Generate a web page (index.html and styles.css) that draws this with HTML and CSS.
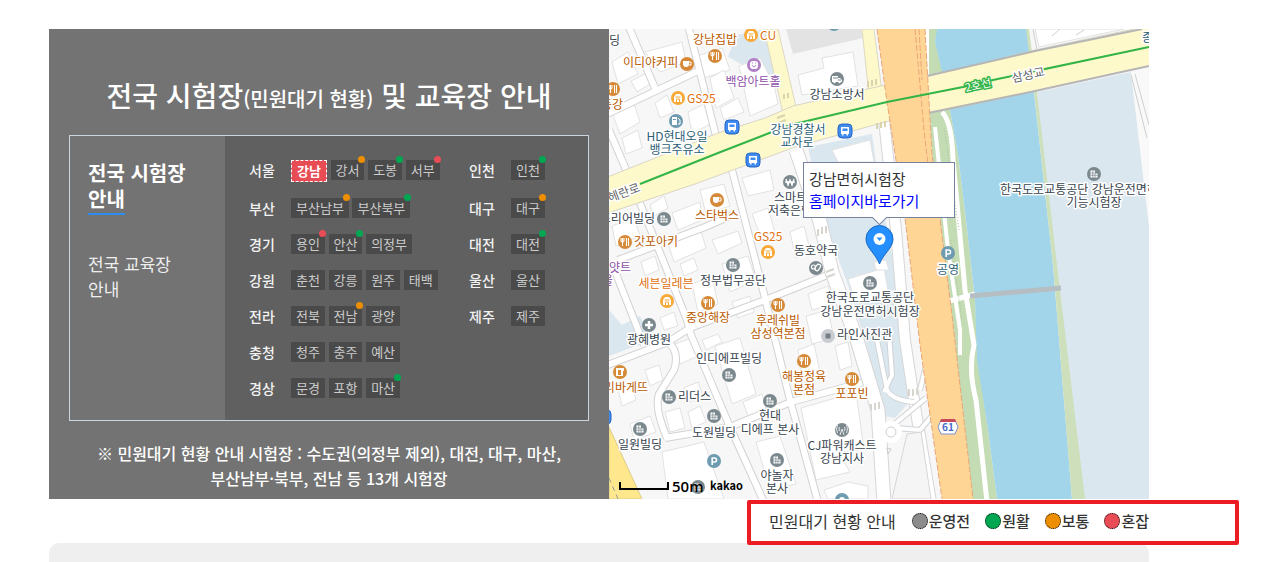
FILE: index.html
```html
<!DOCTYPE html>
<html lang="ko">
<head>
    <meta charset="UTF-8">
    <meta name="viewport" content="width=device-width, initial-scale=1.0">
    <title>전국 시험장 및 교육장 안내</title>
    <link rel="stylesheet" href="styles.css">
</head>
<body>
    <main class="container">
        <section class="guide">
            <div class="panel">
                <h1>전국 시험장<small>(민원대기 현황)</small> 및 교육장 안내</h1>
                <div class="tabs">
                    <nav class="tab-menu">
                        <a href="#test" class="active">전국 시험장 <span>안내</span></a>
                        <a href="#edu">전국 교육장 안내</a>
                    </nav>
                    <div class="regions" id="test">
                        <div class="region-row">
                            <strong>서울</strong>
                            <div><a href="#" class="chip on">강남</a> <a href="#" class="chip normal">강서</a> <a href="#" class="chip smooth">도봉</a> <a href="#" class="chip busy">서부</a></div>
                            <strong>인천</strong>
                            <div><a href="#" class="chip smooth">인천</a></div>
                        </div>
                        <div class="region-row">
                            <strong>부산</strong>
                            <div><a href="#" class="chip normal">부산남부</a> <a href="#" class="chip smooth">부산북부</a></div>
                            <strong>대구</strong>
                            <div><a href="#" class="chip normal">대구</a></div>
                        </div>
                        <div class="region-row">
                            <strong>경기</strong>
                            <div><a href="#" class="chip busy">용인</a> <a href="#" class="chip smooth">안산</a> <a href="#" class="chip">의정부</a></div>
                            <strong>대전</strong>
                            <div><a href="#" class="chip smooth">대전</a></div>
                        </div>
                        <div class="region-row">
                            <strong>강원</strong>
                            <div><a href="#" class="chip">춘천</a> <a href="#" class="chip">강릉</a> <a href="#" class="chip">원주</a> <a href="#" class="chip">태백</a></div>
                            <strong>울산</strong>
                            <div><a href="#" class="chip">울산</a></div>
                        </div>
                        <div class="region-row">
                            <strong>전라</strong>
                            <div><a href="#" class="chip">전북</a> <a href="#" class="chip normal">전남</a> <a href="#" class="chip">광양</a></div>
                            <strong>제주</strong>
                            <div><a href="#" class="chip">제주</a></div>
                        </div>
                        <div class="region-row">
                            <strong>충청</strong>
                            <div><a href="#" class="chip">청주</a> <a href="#" class="chip">충주</a> <a href="#" class="chip">예산</a></div>
                        </div>
                        <div class="region-row">
                            <strong>경상</strong>
                            <div><a href="#" class="chip">문경</a> <a href="#" class="chip">포항</a> <a href="#" class="chip smooth">마산</a></div>
                        </div>
                    </div>
                </div>
                <p class="notice">※ 민원대기 현황 안내 시험장 : 수도권(의정부 제외), 대전, 대구, 마산,<br>부산남부·북부, 전남 등 13개 시험장</p>
            </div>

            <div class="map">
                <svg class="map-canvas" viewBox="609 29 540 470" preserveAspectRatio="xMidYMid slice" role="img" aria-label="강남면허시험장 지도">
                    <defs>
                        <g id="bldg"><circle r="7" fill="#7b898f"/><path d="M-3.5-3.5H1V-.5H3.5V3.5H-3.5Z" fill="#fff"/><path d="M-1.2-3.5V3.5M1-.5V3.5M-3.5-1H1M-3.5 1.3H3.5" stroke="#7b898f" stroke-width=".7"/></g>
                        <g id="food"><circle r="7" fill="#d68a38"/><path d="M-4-4V-1.5Q-4 0-2.5 0T-1-1.5V-4M-2.5-4V4M1.5-4V4M3.5-4V4" stroke="#fff" stroke-width="1.1" fill="none"/></g>
                        <g id="cafe"><circle r="7" fill="#d68a38"/><path d="M-4-3H2V0Q2 3-1 3T-4 0Z" fill="#fff"/><path d="M2-2H4V1H2" fill="none" stroke="#fff"/></g>
                        <g id="store"><circle r="7" fill="#f8a938"/><path d="M-4-1L-2-4H2L4-1V4H-4Z" fill="#fff"/><path d="M-2.5-1H2.5M-1.5 4V1H1.5V4" stroke="#f8a938" fill="none"/></g>
                        <g id="bus"><rect x="-7" y="-7" width="14" height="14" rx="4" fill="#3f8bf0" stroke="#2767c4"/><path d="M-4-4H4V3H3V4.5H1.5V3H-1.5V4.5H-3V3H-4Z" fill="#fff"/><path d="M-2.5-2.5H2.5V0H-2.5Z" fill="#3f8bf0"/></g>
                        <g id="park"><circle r="7" fill="#6f9bb0"/><path d="M-1.8 4V-3H.5Q2.5-3 2.5-1T.5 1H-1.8" fill="none" stroke="#fff" stroke-width="1.6"/></g>
                        <path id="streets" d="M688 25L716 136M640 203L687 320 691 335 730 427 764 502M732 170L763 290 790 400 818 502M605 366L668 342 690 328 765 300 835 272M665 438L730 427 791 402 864 382M613 266L644 345M668 342Q680 352 674 370L659 394Q654 408 667 438M618 260L705 227 735 214M605 115L700 70M628 25L655 88M609 130L627 172"/>
                        <path id="avenue" d="M796 150L820 222 832 272 857 340 878 410 884 502"/>
                        <path id="frontage" d="M884 120L896 230 905 340 914 400 931 502"/>
                        <path id="ramps" d="M877 340L887 390Q892 400 914 402M889 334L892 375 884 392M892 426L926 398M930 350L920 390M896 428L920 430 932 416"/>
                    </defs>

                    <rect x="609" y="29" width="540" height="470" fill="#f7f7f8"/>

                    <!-- blocks -->
                    <g fill="#dbe7ef">
                        <path d="M728 57L736 35 766 29 775 80 756 72Z"/>
                        <path d="M609 310L622 325 640 316 652 340 609 356Z"/>
                        <path d="M808 147L872 134 880 190 893 260 902 340 911 400 895 418 883 416 868 350 848 285 823 218Z"/>
                        <path d="M1037 92L1131 72 1149 225V499H1083L1058 300Z"/>
                    </g>
                    <path d="M786 29H861L863 38 793 54Z" fill="#e3e3e4"/>

                    <!-- buildings -->
                    <g fill="#fff" stroke="#e2e2e3">
                        <path d="M645 52L682 42 686 62 660 72Z"/><path d="M612 62L628 52 638 74 618 84Z"/><path d="M631 81L645 74 650 84 637 92Z"/>
                        <path d="M655 103L667 95 674 112 660 118Z"/><path d="M611 110L634 104 640 122 620 134Z"/><path d="M688 112L704 104 710 124 692 134Z"/>
                        <path d="M622 138L638 130 642 148 626 154Z"/><path d="M697 56L722 48 730 70 703 78Z"/><path d="M710 78L724 70 734 98 716 108Z"/><path d="M720 108L738 98 744 112 724 120Z"/>
                        <path d="M739 66L760 58 774 84 778 104 750 116Z"/><path d="M798 75L824 68 822 58 853 52 858 86 802 95Z"/>
                        <path d="M700 190L724 184 730 206 706 214Z"/><path d="M650 205L664 196 668 208 654 216Z"/><path d="M672 213L700 202 702 220 678 230Z"/>
                        <path d="M668 243L701 231 706 248 674 262Z"/><path d="M712 240L738 231 742 243 718 254Z"/><path d="M612 226L634 218 640 236 616 246Z"/>
                        <path d="M641 262L655 256 659 270 645 276Z"/><path d="M680 264L694 258 698 270 684 276Z"/><path d="M752 214L768 208 776 236 762 240Z"/>
                        <path d="M742 178L770 170 774 190 748 196Z"/><path d="M790 232L804 226 810 250 796 258Z"/><path d="M722 264L748 256 756 280 730 292Z"/>
                        <path d="M692 284L712 276 718 304 698 312Z"/><path d="M660 318L674 312 678 326 664 330Z"/><path d="M732 302L750 296 754 312 738 318Z"/>
                        <path d="M675 344L692 338 698 356 680 364Z"/><path d="M645 370L659 365 663 380 650 386Z"/><path d="M618 388L632 384 636 400 622 406Z"/>
                        <path d="M715 346L740 338 756 394 732 404Z"/><path d="M702 340L718 334 722 342 706 350Z"/><path d="M684 388L698 382 703 396 690 402Z"/>
                        <path d="M665 412L680 408 685 428 670 432Z"/><path d="M688 412L700 406 706 422 692 428Z"/><path d="M630 424L650 416 656 432 634 440Z"/>
                        <path d="M662 452L704 442 724 499H668Z"/><path d="M743 402L762 394 766 410 748 416Z"/><path d="M756 442L780 436 796 484 770 490Z"/>
                        <path d="M798 350L814 344 820 372 802 376Z"/><path d="M835 346L848 342 852 366 840 370Z"/><path d="M808 294L828 286 834 304 812 310Z"/>
                        <path d="M806 316L828 310 834 338 812 344Z"/><path d="M848 279L884 268 889 296 856 304Z"/><path d="M874 262L886 260 889 270 876 270Z"/>
                        <path d="M801 408L856 392 864 450 838 452 850 472 816 480Z"/><path d="M824 490L848 482 868 486V499H828Z"/>
                        <path d="M1035 29L1039 47 1124 29Z"/><path d="M832 150L870 140 874 162H838Z"/>
                    </g>

                    <!-- side streets -->
                    <g fill="none" stroke-linejoin="round">
                        <use href="#streets" stroke="#d2d2d4" stroke-width="8"/>
                        <use href="#streets" stroke="#fff" stroke-width="6"/>
                        <use href="#avenue" stroke="#d6d6d8" stroke-width="15"/>
                        <use href="#avenue" stroke="#fff" stroke-width="13"/>
                        <use href="#frontage" stroke="#d6d6d8" stroke-width="12"/>
                        <use href="#frontage" stroke="#fff" stroke-width="10"/>
                        <use href="#ramps" stroke="#d0d3d6" stroke-width="6"/>
                        <use href="#ramps" stroke="#fff" stroke-width="4"/>
                        <circle cx="891" cy="432" r="11" fill="#fff"/><circle cx="891" cy="432" r="5" stroke="#ccd0d3"/>
                        <path d="M907 434L921 432 931 499H892Z" fill="#f5f5f6" stroke="#d6d6d8"/>
                    </g>
                    <path d="M871 404V411M875 403V410M879 402V409M909 389V396M913 389V396M917 388V395M818 229V236M822 227V234M826 226V233M826 272L834 269M827 277L835 274" stroke="#d8d5cf" stroke-width="2"/>
                    <path d="M887 448L891 449 888 454Z" fill="none" stroke="#ccc"/>

                    <!-- river and its banks -->
                    <path d="M925 29H938L935 42 943 72 950 110 958 155 966 220 975 300 978 360 988 430 997 499H973L950 330 932 155Z" fill="#c3dcb3"/>
                    <path d="M937 29L935 42 942 72 950 110 958 155 966 220 975 300 977 360 988 430 997 499H1072L1053 265 1034 92 1027 29Z" fill="#a3d5ea"/>
                    <path d="M1026 29H1029L1037 92 1057 265 1085 499H1072L1053 265 1034 92Z" fill="#cde0bb"/>
                    <path d="M946 302L975 294" stroke="#fff" stroke-width="5"/>
                    <path d="M970 296L1061 288" stroke="#b5bec3" stroke-width="5"/>
                    <g fill="none" stroke="#fff">
                        <path d="M935 127L948 250 960 330 960 355" stroke-width="4"/>
                        <path d="M942 112Q952 122 953 160L965 290 974 345Q968 370 976 400L987 502" stroke-width="5"/>
                        <path d="M927 29V76" stroke-width="4"/>
                    </g>
                    <path d="M944 128L959 230M951 240L962 320" stroke="#aebfa4" stroke-dasharray="1 2"/>

                    <!-- main roads -->
                    <path d="M764 29H778L796 107 784 118ZM862 29H874L882 92 869 95Z" fill="#fef9cb" stroke="#ddd9c0"/>
                    <path d="M605 178L718 133 765 118 793 106 885 85 927 76 980 64 1035 50 1153 25V65L1035 91 970 105 928 113 885 122 795 147 695 184 605 214Z" fill="#fef9cb" stroke="#d8d5c4"/>
                    <path d="M927 76L1035 51 1142 29M928 113L1035 91 1149 66" fill="none" stroke="#b6b6b6" stroke-width="2"/>
                    <path d="M868 81V87M872 80V86M876 79V85M877 123V129M881 122V128M885 121V127M777 118L785 115M778 123L786 120M784 94V99M788 93V98" stroke="#d9d4ae" stroke-width="2"/>
                    <path d="M609 427L642 499H609Z" fill="#ffe78d" stroke="#dccb85"/>
                    <path d="M609 478L618 499" stroke="#9a9a9a" stroke-dasharray="5 4"/>
                    <path d="M877 29H925L932 155 952 315 973 499H942L920 345 905 218 887 102Z" fill="#ffd596"/>
                    <g fill="none" stroke="#eba679" stroke-dasharray="6 2">
                        <path d="M877 29L887 102 905 218 920 345 942 499"/><path d="M925 29L932 155 952 315 973 499"/><path d="M915 29L924 130 928 165M919 29L922 80"/>
                    </g>
                    <path d="M640 184L718 153 772 132 790 125 887 102 963 87 993 80 1149 47" fill="none" stroke="#32b447" stroke-width="2"/>
                    <path d="M1131 72L1149 225V68Z" fill="#f9f9f9"/>
                    <path d="M1131 75L1147 138M1135 74L1149 125M1033 29L1037 50M1052 36L1060 29M1076 35L1084 30" stroke="#cfcfcf" fill="none"/>

                    <!-- places -->
                    <use href="#store" x="751" y="35"/><use href="#store" x="678" y="98"/><use href="#store" x="768" y="252"/><use href="#store" x="667" y="301"/>
                    <use href="#food" x="715" y="56"/><use href="#food" x="613" y="89"/><use href="#food" x="625" y="242"/><use href="#food" x="708" y="303"/>
                    <use href="#food" x="778" y="305"/><use href="#food" x="804" y="361"/><use href="#food" x="852" y="379"/>
                    <use href="#cafe" x="687" y="64"/><use href="#cafe" x="717" y="200"/>
                    <use href="#bus" x="732" y="127"/><use href="#bus" x="753" y="160"/><use href="#bus" x="845" y="131"/><use href="#bus" x="604" y="417"/>
                    <use href="#bldg" x="1094" y="174"/><use href="#bldg" x="664" y="219"/><use href="#bldg" x="733" y="265"/><use href="#bldg" x="870" y="283"/>
                    <use href="#bldg" x="729" y="375"/><use href="#bldg" x="669" y="397"/><use href="#bldg" x="714" y="416"/><use href="#bldg" x="770" y="401"/>
                    <use href="#bldg" x="640" y="429"/><use href="#bldg" x="777" y="460"/><use href="#bldg" x="698" y="487"/>
                    <use href="#park" x="948" y="253"/><use href="#park" x="714" y="461"/>
                    <circle cx="834" cy="24" r="7" fill="#6f9bb0"/><circle cx="842" cy="500" r="7" fill="#6f9bb0"/><circle cx="842" cy="500" r="3" fill="#fff"/>
                    <circle cx="754" cy="65" r="7" fill="#b07fc4"/><rect x="750" y="61" width="8" height="8" rx="3" fill="#fff"/><path d="M752 65Q754 69 756 65M752 63H753M755 63H756" fill="none" stroke="#b07fc4"/>
                    <circle cx="676" cy="121" r="7" fill="#6f9bb0"/><path d="M672 117H677V125H672Z" fill="#fff"/><path d="M678 118L680 120V124H678" fill="none" stroke="#fff"/><path d="M673 119.5H676" stroke="#6f9bb0"/>
                    <circle cx="837" cy="79" r="7" fill="#7b898f"/><path d="M832 76H838V78H840L842 80V82H832Z" fill="#fff"/><circle cx="834.5" cy="82" r="1.2" fill="#fff"/><circle cx="839.5" cy="82" r="1.2" fill="#fff"/><path d="M833 78H838M838 80H841" stroke="#7b898f"/>
                    <circle cx="790" cy="182" r="7" fill="#7b898f"/><path d="M786 179L788 185 790 180 792 185 794 179M785 182H795" fill="none" stroke="#fff" stroke-width="1.3"/>
                    <circle cx="816" cy="268" r="7" fill="#7b898f"/><g fill="none" stroke="#fff" stroke-width="1.2"><circle cx="813.5" cy="267" r="2"/><rect x="816" y="264" width="4" height="7" rx="2" transform="rotate(35 818 267)"/></g>
                    <circle cx="649" cy="325" r="7" fill="#7b898f"/><path d="M645 325H653M649 321V329" stroke="#fff" stroke-width="2.5"/>
                    <circle cx="828" cy="336" r="7" fill="#c9ccd1"/><path d="M825.5 333.5H830.5V338.5H825.5Z" fill="#777e84"/>
                    <circle cx="620" cy="372" r="7" fill="#d68a38"/><path d="M616 368H624V371H623V376H616Z" fill="#fff"/><path d="M618 370H621V375H618Z" fill="#d68a38"/>
                    <circle cx="842" cy="430" r="7" fill="#7b898f"/><path d="M842 429L840 435M842 429L844 435M839.5 431Q838.5 429 839.5 427M844.5 431Q845.5 429 844.5 427M837.5 433Q835.5 429 837.5 425M846.5 433Q848.5 429 846.5 425" fill="none" stroke="#fff" stroke-width=".8"/>
                    <path d="M941 420H955L958 427 955 434H941L938 427Z" fill="#fff" stroke="#7a93cf"/><path d="M941 419L955 419 956 422H940Z" fill="#c6495b"/>

                    <g class="label">
                        <text x="609" y="45">딩</text>
                        <text x="837" y="99" class="mid">강남소방서</text>
                        <text x="1000" y="194">한국도로교통공단 강남운전면허</text><text x="1094" y="207" class="mid">기능시험장</text>
                        <text x="774" y="202">스마트</text><text x="768" y="215">저축은행</text>
                        <text x="655" y="223" class="end">프리어빌딩</text>
                        <text x="733" y="285" class="mid">정부법무공단</text>
                        <text x="816" y="255" class="mid">동호약국</text>
                        <text x="649" y="344" class="mid">광혜병원</text>
                        <text x="870" y="302" class="mid">한국도로교통공단</text><text x="870" y="316" class="mid">강남운전면허시험장</text>
                        <text x="837" y="339">라인사진관</text>
                        <text x="729" y="363" class="mid">인디에프빌딩</text>
                        <text x="678" y="401">리더스</text>
                        <text x="714" y="437" class="mid">도원빌딩</text>
                        <text x="770" y="420" class="mid">현대</text><text x="770" y="434" class="mid">디에프 본사</text>
                        <text x="640" y="449" class="mid">일원빌딩</text>
                        <text x="842" y="450" class="mid">CJ파워캐스트</text><text x="842" y="463" class="mid">강남지사</text>
                        <text x="777" y="480" class="mid">야놀자</text><text x="777" y="493" class="mid">본사</text>
                    </g>
                    <g class="label brown">
                        <text x="715" y="44" class="mid">강남집밥</text>
                        <text x="623" y="67">이디야커피</text>
                        <text x="623" y="109" class="end">동강</text>
                        <text x="717" y="220" class="mid">스타벅스</text>
                        <text x="634" y="246">갓포아키</text>
                        <text x="708" y="322" class="mid">중앙해장</text>
                        <text x="778" y="325" class="mid">후레쉬빌</text><text x="778" y="338" class="mid">삼성역본점</text>
                        <text x="648" y="392" class="end">파리바게뜨</text>
                        <text x="804" y="381" class="mid">해봉정육</text><text x="804" y="394" class="mid">본점</text>
                        <text x="852" y="398" class="mid">포포빈</text>
                    </g>
                    <g class="label orange">
                        <text x="760" y="40">CU</text><text x="687" y="103">GS25</text><text x="768" y="241" class="mid">GS25</text>
                        <text x="666" y="288" class="mid">세븐일레븐</text>
                    </g>
                    <g class="label teal">
                        <text x="677" y="141" class="mid">HD현대오일</text><text x="677" y="154" class="mid">뱅크주유소</text>
                        <text x="798" y="134" class="mid">강남경찰서</text><text x="797" y="147" class="mid">교차로</text>
                        <text x="948" y="274" class="mid">공영</text><text x="1142" y="42">종</text>
                    </g>
                    <g class="label purple">
                        <text x="753" y="86" class="mid">백암아트홀</text><text x="631" y="272" class="end">하얏트</text><text x="613" y="285" class="end">서울</text>
                    </g>
                    <g class="label road">
                        <text x="641" y="191" class="end" transform="rotate(-20 641 191)">테헤란로</text>
                        <text x="1029" y="79" class="mid" transform="rotate(-12 1029 79)">삼성교</text>
                        <text x="979" y="89" class="mid line" transform="rotate(-12 979 89)">2호선</text>
                    </g>
                    <text x="948" y="431" class="route">61</text>

                    <path d="M620 482V489H668V482" fill="none" stroke="#000" stroke-width="2"/>
                    <text x="672" y="492" class="scale">50m</text>
                    <text x="710" y="490" class="brand">kakao</text>

                    <!-- marker -->
                    <path d="M879.5 264C876 254 866 248 866 239A13.5 13.5 0 0 1 893 239C893 248 883 254 879.5 264Z" fill="#258fff" stroke="#1766bd"/>
                    <circle cx="879.5" cy="239" r="6" fill="#fff"/><path d="M876.5 237.5H882.5L879.5 241Z" fill="#258fff"/>
                </svg>
                <div class="info-window">
                    강남면허시험장<br>
                    <a href="#">홈페이지바로가기</a>
                </div>
            </div>
        </section>

        <div class="legend">
            <span class="legend-title">민원대기 현황 안내</span>
            <ul>
                <li class="before">운영전</li>
                <li class="smooth">원활</li>
                <li class="normal">보통</li>
                <li class="busy">혼잡</li>
            </ul>
        </div>
        <div class="next-section"></div>
    </main>
</body>
</html>
```
FILE: styles.css
```css
* {
    box-sizing: border-box;
}
body {
    font-family: 'Noto Sans CJK KR', sans-serif;
    margin: 0;
    background-color: #fff;
    color: #333;
}
a {
    color: inherit;
    text-decoration: none;
}
.container {
    display: flex;
    flex-direction: column;
    max-width: 1149px;
    min-height: 100vh;
    padding: 29px 0 0 49px;
}
.guide {
    display: grid;
    grid-template-columns: 28fr 27fr;
}
.panel {
    background: #737373;
    color: #fff;
    padding: 46px 20px 8px;
}
h1 {
    margin: 0 0 20px;
    font-size: 28px;
    font-weight: 500;
    line-height: 40px;
    text-align: center;
}
h1 small {
    display: inline-block;
    font-size: 20px;
    line-height: 20px;
}
.tabs {
    display: grid;
    grid-template-columns: 155px 1fr;
    border: 1px solid #cbd5e0;
}
.tab-menu {
    display: flex;
    flex-direction: column;
    gap: 36px;
    padding: 24px 36px 24px 18px;
}
.tab-menu a {
    font-size: 17px;
    line-height: 25px;
    color: #eee;
}
.tab-menu a.active {
    font-size: 20px;
    font-weight: 700;
    line-height: 26px;
    color: #fff;
}
.tab-menu a.active span {
    display: inline-block;
    padding-bottom: 1px;
    border-bottom: 2px solid #2b8df0;
}
.regions {
    display: flex;
    flex-direction: column;
    gap: 16px;
    padding: 24px 0 22px 24px;
    background: #606060;
}
.region-row {
    display: grid;
    grid-template-columns: 42px 178px 42px 1fr;
    font-size: 13px;
    line-height: 20px;
}
.region-row div {
    display: flow-root;
}
.region-row strong {
    height: 20px;
    font-size: 14px;
    font-weight: 500;
    color: #f2f2f2;
}
.chip {
    position: relative;
    display: inline-block;
    padding: 0 5px;
    background: #4a4a4a;
    color: #ccc;
    line-height: 20px;
    vertical-align: top;
}
.chip.on {
    border: 1px dashed #fff;
    background: #e84c55;
    color: #fff;
    font-weight: 700;
}
.chip.normal::after,
.chip.smooth::after,
.chip.busy::after {
    content: "";
    position: absolute;
    top: -4px;
    right: -1px;
    width: 7px;
    height: 7px;
    border-radius: 50%;
}
.notice {
    margin: 20px 0 0;
    font-size: 16px;
    font-weight: 500;
    line-height: 25px;
    text-align: center;
}

/* status colours */
.before::before {
    background: #8c8c8c;
}
.smooth::after,
.smooth::before {
    background: #00a651;
}
.normal::after,
.normal::before {
    background: #ee8f00;
}
.busy::after,
.busy::before {
    background: #e84c55;
}

/* map */
.map {
    position: relative;
    overflow: hidden;
}
.map-canvas {
    display: block;
    width: 100%;
    height: 100%;
}
.label text {
    font-size: 12px;
    font-weight: 400;
    fill: #37444e;
    stroke: #fff;
    stroke-width: 3px;
    stroke-linejoin: round;
    paint-order: stroke;
}
.label.brown text {
    fill: #b85a00;
}
.label.orange text {
    fill: #e07010;
}
.label.teal text {
    fill: #2d6076;
}
.label.purple text {
    fill: #8c50a8;
}
.label.road text {
    fill: #666;
}
.label.road .line {
    fill: #fff;
    stroke: #32b447;
    font-size: 11px;
}
.mid,
.route {
    text-anchor: middle;
}
.end {
    text-anchor: end;
}
.route {
    font-size: 10px;
    font-weight: 700;
    fill: #4668c8;
}
.scale {
    font-family: 'Open Sans', sans-serif;
    font-size: 15px;
    font-weight: 600;
}
.brand {
    font-size: 11px;
    font-weight: 700;
}
.info-window {
    position: absolute;
    top: 133px;
    left: 50%;
    width: 152px;
    padding: 5px;
    transform: translateX(-50%);
    border: 1px solid #76819f;
    background: #fff;
    font-size: 15px;
    line-height: 22px;
}
.info-window::after {
    content: "";
    position: absolute;
    bottom: -6px;
    left: 50%;
    width: 10px;
    height: 10px;
    margin-left: -5px;
    transform: rotate(45deg);
    border: solid #76819f;
    border-width: 0 1px 1px 0;
    background: #fff;
}
.info-window a {
    color: #0000ff;
}

/* legend */
.legend {
    position: relative;
    display: flex;
    align-items: center;
    align-self: flex-end;
    gap: 16px;
    height: 44px;
    font-size: 16px;
}
.legend::after {
    content: "";
    position: absolute;
    inset: 1px -90px -2px -22px;
    border: 4px solid #ec1c24;
    border-radius: 2px;
    pointer-events: none;
}
.legend ul {
    display: flex;
    gap: 15px;
    margin: 0;
    padding: 0;
    list-style: none;
}
.legend li {
    display: flex;
    align-items: center;
    gap: 1px;
    font-size: 15px;
    font-weight: 500;
    line-height: 22px;
}
.legend li::before {
    content: "";
    width: 14px;
    height: 14px;
    border: 1px dotted #000;
    border-radius: 50%;
}
.next-section {
    flex: 1;
    min-height: 19px;
    border-radius: 10px 10px 0 0;
    background: #efefef;
}
```
